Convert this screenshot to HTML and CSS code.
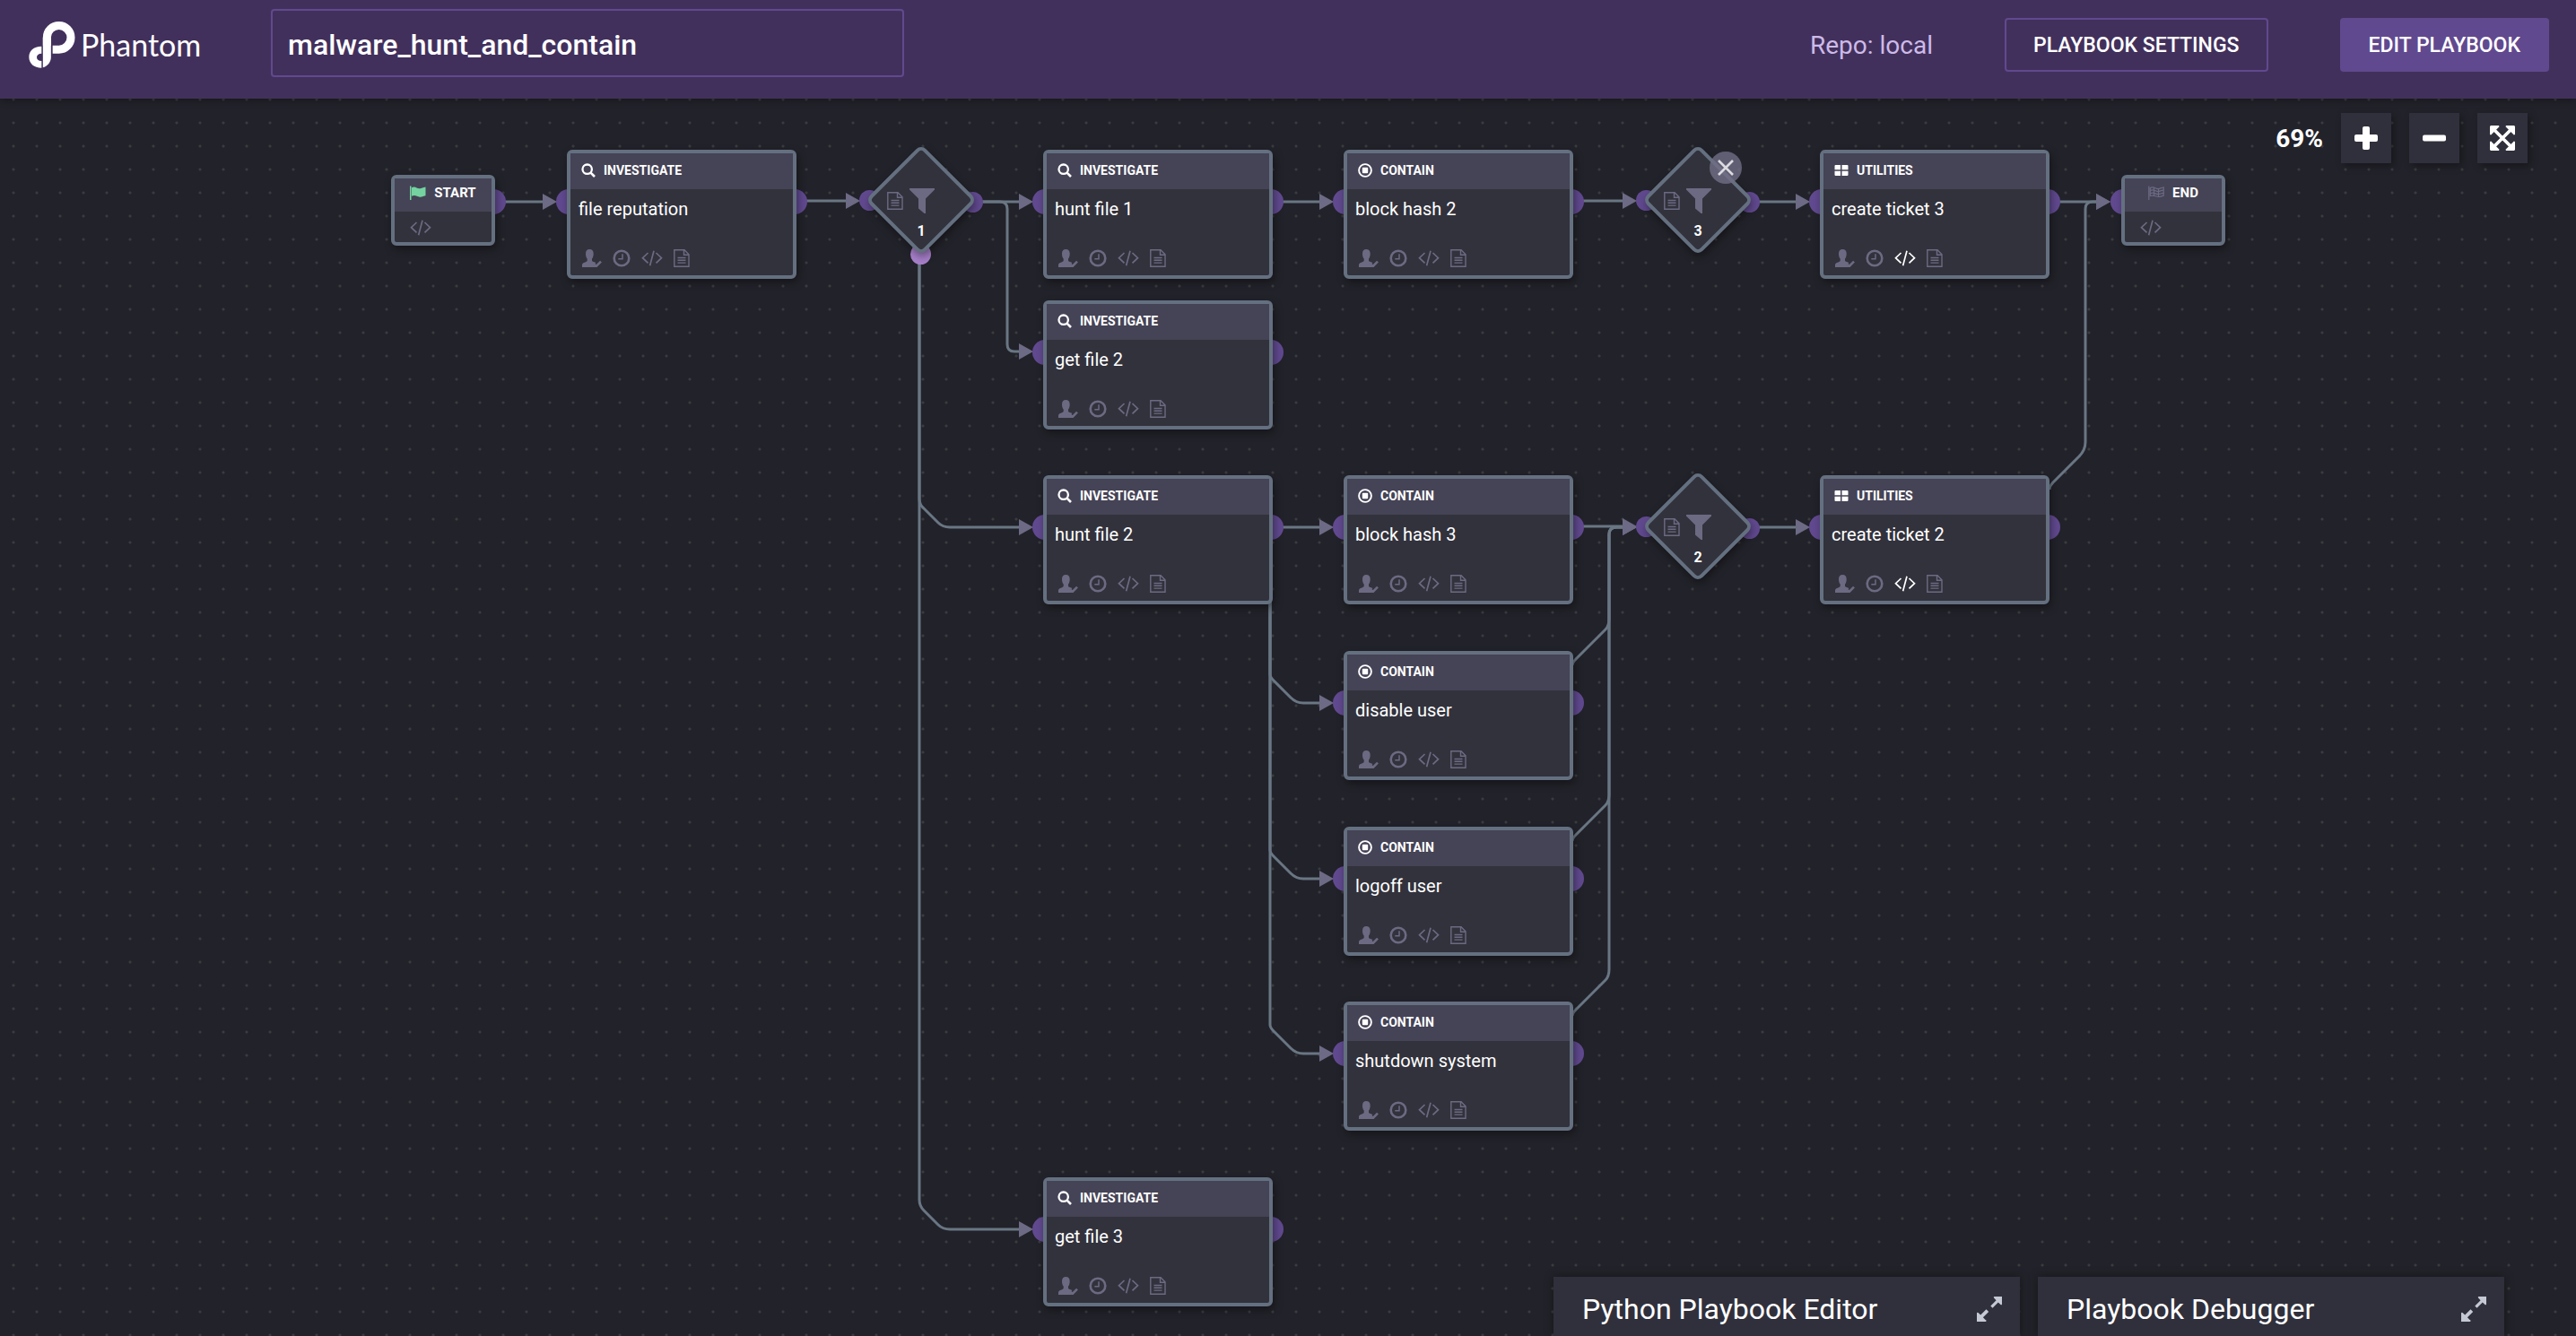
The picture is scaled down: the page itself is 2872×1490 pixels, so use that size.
FILE: index.html
```html
<!DOCTYPE html>
<html lang="en">
<head>
<meta charset="utf-8">
<title>Phantom - malware_hunt_and_contain</title>
<link rel="stylesheet" href="styles.css">
</head>
<body>
<svg class="sprite" aria-hidden="true">
  <symbol id="search" viewBox="0 0 16 16"><circle cx="6.7" cy="6.7" r="5.2" fill="none" stroke="currentColor" stroke-width="2.3"/><path d="M10.3 10.3 15 15" stroke="currentColor" stroke-width="2.6"/></symbol>
  <symbol id="contain" viewBox="0 0 16 16"><circle cx="8" cy="8" r="6.9" fill="none" stroke="currentColor" stroke-width="1.9"/><rect x="4.8" y="4.8" width="6.4" height="6.4" rx="1" fill="currentColor"/></symbol>
  <symbol id="utilities" viewBox="0 0 16 16"><path fill="currentColor" d="M1.5 2H7v5.300H.5V3a1 1 0 0 1 1-1zM8.500 2h6a1 1 0 0 1 1 1v4.300h-7zM.5 8.700H7V14H1.500a1 1 0 0 1-1-1zM8.500 8.700h7V13a1 1 0 0 1-1 1h-6z"/></symbol>
  <symbol id="user" viewBox="0 0 22 20"><path fill="currentColor" d="M4 5C4 1.500 5.500 0 8.300 0s4.400 1.500 4.400 5c0 2.600-.7 4.500-1.700 5.600v2.200c0 1 3.600 1.500 4.300 2.400L13.500 17l1.800 3H0v-2.700c0-2.500 5.700-3 5.700-4.500v-2.200C4.700 9.500 4 7.600 4 5z"/><path d="m13 16.300 2.700 2.700L21 13.600" fill="none" stroke="currentColor" stroke-width="2.600"/></symbol>
  <symbol id="clock" viewBox="0 0 20 20"><circle cx="10" cy="10" r="8.300" fill="none" stroke="currentColor" stroke-width="2.600"/><path d="M11 5.300v5.500H6.300" fill="none" stroke="currentColor" stroke-width="1.500"/></symbol>
  <symbol id="code" viewBox="0 0 24 18"><path d="M7.500 3 1.500 8.700l6 5.700M14 .8 9.600 17.200M16.500 3l6 5.700-6 5.700" fill="none" stroke="currentColor" stroke-width="1.700"/></symbol>
  <symbol id="doc" viewBox="0 0 18 20"><path d="M.8.8H12l5 5v13.400H.8zM11.500.8v5.500H17M4.500 9.500h9M4.500 12.300h9M4.500 15.100h9" fill="none" stroke="currentColor" stroke-width="1.400"/></symbol>
  <symbol id="funnel" viewBox="0 0 28 28"><path fill="currentColor" d="M0 0h28v1.500L18 11.500V28h-1.500L10 22.500v-11L0 1.500z"/></symbol>
  <symbol id="flag" viewBox="0 0 18 16"><path fill="currentColor" d="M0 .5h1.500V16H0zM2 2.200c4-2.500 6 1.600 9 1 2-.3 3.500-1.200 6.500-1.700v9.700c-2 .2-4 1.700-6.500 1.500-3-.3-5-2.700-9-1z"/></symbol>
  <symbol id="finish" viewBox="0 0 18 16"><path d="M.8.5V16M2.300 2.500c4-2.300 6 1.500 9 1 2-.3 3.300-1 5.900-1.500v9.200c-2 .2-3.500 1.500-5.900 1.300-3-.3-5-2.500-9-1z" fill="none" stroke="currentColor" stroke-width="1.200"/><path d="M2.500 5.500c4-2 6 1.500 9 1 2-.3 3-1 5.500-1.300M2.500 8.600c4-2 6 1.500 9 1 2-.3 3-1 5.500-1.300M6.500 1.800v9.500M11.500 3.500v9" fill="none" stroke="currentColor" stroke-width="1.200"/></symbol>
  <symbol id="expand" viewBox="0 0 28 28"><g fill="currentColor"><path d="M18.500 0H27v8.500a1 1 0 0 1-1.500.6l-2.700-2.700-6.300 6.300-2.200-2.200 6.300-6.300L18 1.500a1 1 0 0 1 .5-1.500z" transform="translate(1)"/><path d="M9.500 28H0v-9.500a1 1 0 0 1 1.500-.6l2.700 2.700 6.300-6.300 2.700 2.700-6.300 6.300L9.600 26a1 1 0 0 1-.1 2z"/></g></symbol>
  <symbol id="fit" viewBox="0 0 28 28"><path d="m5 5 18 18M23 5 5 23" stroke="currentColor" stroke-width="3.600"/><path fill="currentColor" d="M1 0h9l.5 1.200L1.200 10.500 0 10V1zM27 0h-9l-.5 1.200 9.300 9.300L28 10V1zM1 28h9l.5-1.200-9.300-9.300L0 18v9zM27 28h-9l-.5-1.200 9.300-9.300L28 18v9z"/></symbol>
</svg>

<header class="topbar">
  <a class="brand" href="#">
    <svg class="brand-mark" viewBox="24 30 154 156" aria-hidden="true">
      <path d="M84 110V83a40 40 0 1 1 40 40.500H103" fill="none" stroke="#fff" stroke-width="27"/>
      <path d="M70.500 83h27v67c0 16-12 30-27 34zM66 113c-28 0-42 16-42 36 0 21 17 36 42 36v-23c-11 0-16-5-16-12 0-8 6-13 16-13z" fill="#fff"/>
    </svg>
    <span>Phantom</span>
  </a>
  <input class="playbook-name" type="text" value="malware_hunt_and_contain" aria-label="Playbook name">
  <span class="repo">Repo: local</span>
  <button class="btn" type="button">PLAYBOOK SETTINGS</button>
  <button class="btn btn-primary" type="button">EDIT PLAYBOOK</button>
</header>

<main class="canvas">
  <svg class="edges" aria-hidden="true">
    <defs><marker id="arrow" viewBox="0 0 16 18" markerWidth="16" markerHeight="18" refX="0" refY="9" orient="auto" markerUnits="userSpaceOnUse"><path d="M0 0 16 9 0 18z" fill="#6c6a84"/></marker></defs>
    <g class="with-arrow">
      <path d="M560 115H605"/>
      <path d="M895 114H943"/>
      <path d="M1092 115H1136"/>
      <path d="M1092 115H1115Q1123 115 1123 123V274Q1123 282 1131 282H1136"/>
      <path d="M1025 180V446Q1025 453 1030 457L1046 473Q1051 478 1059 478H1136"/>
      <path d="M1025 180V1228Q1025 1235 1030 1240L1046 1256Q1051 1261 1059 1261H1136"/>
      <path d="M1414 115H1471"/>
      <path d="M1750 114H1809"/>
      <path d="M1960 115H2002"/>
      <path d="M2281 115H2337"/>
      <path d="M2285 436Q2285 432 2289 428L2318 399Q2325 392 2325 383V123Q2325 115 2333 115H2337"/>
      <path d="M1414 478H1471"/>
      <path d="M1416 500V642Q1416 645 1420 649L1439 668Q1445 674 1453 674H1471"/>
      <path d="M1416 500V838Q1416 841 1420 845L1439 864Q1445 870 1453 870H1471"/>
      <path d="M1416 500V1033Q1416 1036 1420 1040L1439 1059Q1445 1065 1453 1065H1471"/>
      <path d="M1750 477H1809"/>
      <path d="M1753 632Q1753 629 1757 625L1790 592Q1794 588 1794 580V486Q1794 478 1802 478H1809"/>
      <path d="M1753 828Q1753 825 1757 821L1790 788Q1794 784 1794 776V486Q1794 478 1802 478H1809"/>
      <path d="M1753 1023Q1753 1020 1757 1016L1790 983Q1794 979 1794 971V486Q1794 478 1802 478H1809"/>
      <path d="M1960 478H2002"/>
    </g>
  </svg>

  <article class="node terminal x-start y-terminal">
    <i class="port port-out"></i>
    <h2 class="node-head"><svg class="flag flag-start"><use href="#flag"/></svg>START</h2>
    <div class="node-icons"><svg class="i-code"><use href="#code"/></svg></div>
  </article>

  <article class="node x-1 y-1">
    <i class="port port-in"></i><i class="port port-out"></i>
    <h2 class="node-head"><svg class="i-type"><use href="#search"/></svg>INVESTIGATE</h2>
    <p class="node-name">file reputation</p>
    <div class="node-icons"><svg class="i-user"><use href="#user"/></svg><svg class="i-clock"><use href="#clock"/></svg><svg class="i-code"><use href="#code"/></svg><svg class="i-doc"><use href="#doc"/></svg></div>
  </article>

  <article class="filter x-filter-1 y-filter-1">
    <i class="dot dot-in"></i><i class="dot dot-out"></i><i class="dot dot-else"></i>
    <div class="diamond"></div>
    <div class="filter-body"><svg class="i-doc"><use href="#doc"/></svg><svg class="i-funnel"><use href="#funnel"/></svg></div>
    <strong class="filter-number">1</strong>
  </article>

  <article class="node x-2 y-1">
    <i class="port port-in"></i><i class="port port-out"></i>
    <h2 class="node-head"><svg class="i-type"><use href="#search"/></svg>INVESTIGATE</h2>
    <p class="node-name">hunt file 1</p>
    <div class="node-icons"><svg class="i-user"><use href="#user"/></svg><svg class="i-clock"><use href="#clock"/></svg><svg class="i-code"><use href="#code"/></svg><svg class="i-doc"><use href="#doc"/></svg></div>
  </article>

  <article class="node x-2 y-2">
    <i class="port port-in"></i><i class="port port-out"></i>
    <h2 class="node-head"><svg class="i-type"><use href="#search"/></svg>INVESTIGATE</h2>
    <p class="node-name">get file 2</p>
    <div class="node-icons"><svg class="i-user"><use href="#user"/></svg><svg class="i-clock"><use href="#clock"/></svg><svg class="i-code"><use href="#code"/></svg><svg class="i-doc"><use href="#doc"/></svg></div>
  </article>

  <article class="node x-2 y-3">
    <i class="port port-in"></i><i class="port port-out"></i>
    <h2 class="node-head"><svg class="i-type"><use href="#search"/></svg>INVESTIGATE</h2>
    <p class="node-name">hunt file 2</p>
    <div class="node-icons"><svg class="i-user"><use href="#user"/></svg><svg class="i-clock"><use href="#clock"/></svg><svg class="i-code"><use href="#code"/></svg><svg class="i-doc"><use href="#doc"/></svg></div>
  </article>

  <article class="node x-2 y-7">
    <i class="port port-in"></i><i class="port port-out"></i>
    <h2 class="node-head"><svg class="i-type"><use href="#search"/></svg>INVESTIGATE</h2>
    <p class="node-name">get file 3</p>
    <div class="node-icons"><svg class="i-user"><use href="#user"/></svg><svg class="i-clock"><use href="#clock"/></svg><svg class="i-code"><use href="#code"/></svg><svg class="i-doc"><use href="#doc"/></svg></div>
  </article>

  <article class="node x-3 y-1">
    <i class="port port-in"></i><i class="port port-out"></i>
    <h2 class="node-head"><svg class="i-type"><use href="#contain"/></svg>CONTAIN</h2>
    <p class="node-name">block hash 2</p>
    <div class="node-icons"><svg class="i-user"><use href="#user"/></svg><svg class="i-clock"><use href="#clock"/></svg><svg class="i-code"><use href="#code"/></svg><svg class="i-doc"><use href="#doc"/></svg></div>
  </article>

  <article class="node x-3 y-3">
    <i class="port port-in"></i><i class="port port-out"></i>
    <h2 class="node-head"><svg class="i-type"><use href="#contain"/></svg>CONTAIN</h2>
    <p class="node-name">block hash 3</p>
    <div class="node-icons"><svg class="i-user"><use href="#user"/></svg><svg class="i-clock"><use href="#clock"/></svg><svg class="i-code"><use href="#code"/></svg><svg class="i-doc"><use href="#doc"/></svg></div>
  </article>

  <article class="node x-3 y-4">
    <i class="port port-in"></i><i class="port port-out"></i>
    <h2 class="node-head"><svg class="i-type"><use href="#contain"/></svg>CONTAIN</h2>
    <p class="node-name">disable user</p>
    <div class="node-icons"><svg class="i-user"><use href="#user"/></svg><svg class="i-clock"><use href="#clock"/></svg><svg class="i-code"><use href="#code"/></svg><svg class="i-doc"><use href="#doc"/></svg></div>
  </article>

  <article class="node x-3 y-5">
    <i class="port port-in"></i><i class="port port-out"></i>
    <h2 class="node-head"><svg class="i-type"><use href="#contain"/></svg>CONTAIN</h2>
    <p class="node-name">logoff user</p>
    <div class="node-icons"><svg class="i-user"><use href="#user"/></svg><svg class="i-clock"><use href="#clock"/></svg><svg class="i-code"><use href="#code"/></svg><svg class="i-doc"><use href="#doc"/></svg></div>
  </article>

  <article class="node x-3 y-6">
    <i class="port port-in"></i><i class="port port-out"></i>
    <h2 class="node-head"><svg class="i-type"><use href="#contain"/></svg>CONTAIN</h2>
    <p class="node-name">shutdown system</p>
    <div class="node-icons"><svg class="i-user"><use href="#user"/></svg><svg class="i-clock"><use href="#clock"/></svg><svg class="i-code"><use href="#code"/></svg><svg class="i-doc"><use href="#doc"/></svg></div>
  </article>

  <article class="filter x-filter-2 y-filter-1">
    <i class="dot dot-in"></i><i class="dot dot-out"></i>
    <div class="diamond"></div>
    <div class="filter-body"><svg class="i-doc"><use href="#doc"/></svg><svg class="i-funnel"><use href="#funnel"/></svg></div>
    <strong class="filter-number">3</strong>
    <button class="close" type="button" aria-label="Remove filter 3"><svg viewBox="0 0 18 18"><path d="m1 1 16 16M17 1 1 17" stroke="currentColor" stroke-width="2.600"/></svg></button>
  </article>

  <article class="filter x-filter-2 y-filter-2">
    <i class="dot dot-in"></i><i class="dot dot-out"></i>
    <div class="diamond"></div>
    <div class="filter-body"><svg class="i-doc"><use href="#doc"/></svg><svg class="i-funnel"><use href="#funnel"/></svg></div>
    <strong class="filter-number">2</strong>
  </article>

  <article class="node x-4 y-1">
    <i class="port port-in"></i><i class="port port-out"></i>
    <h2 class="node-head"><svg class="i-type"><use href="#utilities"/></svg>UTILITIES</h2>
    <p class="node-name">create ticket 3</p>
    <div class="node-icons"><svg class="i-user"><use href="#user"/></svg><svg class="i-clock"><use href="#clock"/></svg><svg class="i-code is-on"><use href="#code"/></svg><svg class="i-doc"><use href="#doc"/></svg></div>
  </article>

  <article class="node x-4 y-3">
    <i class="port port-in"></i><i class="port port-out"></i>
    <h2 class="node-head"><svg class="i-type"><use href="#utilities"/></svg>UTILITIES</h2>
    <p class="node-name">create ticket 2</p>
    <div class="node-icons"><svg class="i-user"><use href="#user"/></svg><svg class="i-clock"><use href="#clock"/></svg><svg class="i-code is-on"><use href="#code"/></svg><svg class="i-doc"><use href="#doc"/></svg></div>
  </article>

  <article class="node terminal x-end y-terminal">
    <i class="port port-in"></i>
    <h2 class="node-head"><svg class="flag"><use href="#finish"/></svg>END</h2>
    <div class="node-icons"><svg class="i-code"><use href="#code"/></svg></div>
  </article>

  <div class="zoom-bar">
    <output class="zoom-level">69%</output>
    <button type="button" aria-label="Zoom in"><svg class="i-zoom" viewBox="0 0 26 26"><path d="M11 0h4q2 0 2 2v7h7q2 0 2 2v4q0 2-2 2h-7v7q0 2-2 2h-4q-2 0-2-2v-7H2q-2 0-2-2v-4q0-2 2-2h7V2q0-2 2-2z" fill="currentColor"/></svg></button>
    <button type="button" aria-label="Zoom out"><svg class="i-zoom" viewBox="0 0 26 26"><rect y="9.500" width="26" height="7" rx="2" fill="currentColor"/></svg></button>
    <button type="button" aria-label="Fit to screen"><svg class="i-fit"><use href="#fit"/></svg></button>
  </div>

  <div class="dock">
    <button class="panel" type="button">Python Playbook Editor<svg class="i-expand"><use href="#expand"/></svg></button>
    <button class="panel" type="button">Playbook Debugger<svg class="i-expand"><use href="#expand"/></svg></button>
  </div>
</main>
</body>
</html>
```

FILE: styles.css
```css
* { box-sizing: border-box; }

body {
  margin: 0;
  min-height: 100vh;
  display: flex;
  flex-direction: column;
  background: #22222a;
  color: #fff;
  font-family: Roboto, "Liberation Sans", sans-serif;
}

button, input { font: inherit; color: inherit; }
button { cursor: pointer; }
svg { display: block; flex: none; }
.sprite { position: absolute; width: 0; height: 0; }

/* Top bar */
.topbar {
  position: relative;
  z-index: 1;
  display: flex;
  align-items: center;
  height: 110px;
  padding: 0 30px 10px 32px;
  background: #42305c;
  box-shadow: 0 2px 8px rgba(0, 0, 0, .35);
}
.brand {
  display: flex;
  align-items: center;
  gap: 6px;
  width: 270px;
  color: #fff;
  font: 400 34px/52px Lato, sans-serif;
  text-decoration: none;
}
.brand-mark { width: 52px; height: 52px; }
.playbook-name {
  width: 706px;
  height: 76px;
  margin-top: -4px;
  padding: 4px 17px 0;
  border: 2px solid #61498f;
  border-radius: 4px;
  background: transparent;
  font-size: 32px;
  font-weight: 500;
}
.repo {
  margin-left: auto;
  margin-right: 80px;
  color: #cdbbe8;
  font-size: 28px;
}
.btn {
  height: 60px;
  padding: 0 30px;
  border: 2px solid #61498f;
  border-radius: 4px;
  background: transparent;
  font-size: 23px;
  font-weight: 500;
}
.btn-primary { margin-left: 80px; background: #61498f; }

/* Canvas */
.canvas {
  position: relative;
  isolation: isolate;
  flex: 1;
  min-height: 1380px;
  overflow: hidden;
  background: #22222a radial-gradient(circle at 13px 13px, #3a3b40 1px, transparent 2px) 2px -12px / 26px 26px;
}
.edges {
  position: absolute;
  inset: 0;
  z-index: -2;
  width: 100%;
  height: 100%;
}
.with-arrow path {
  fill: none;
  stroke: #697683;
  stroke-width: 3;
  marker-end: url(#arrow);
}

/* Blocks */
.node {
  position: absolute;
  width: 256px;
  height: 144px;
  border: 4px solid #647080;
  border-radius: 6px;
  background: #32323c;
  box-shadow: 2px 4px 10px rgba(0, 0, 0, .4);
}
.node-head {
  display: flex;
  align-items: center;
  gap: 9px;
  height: 40px;
  margin: 0;
  padding: 0 12px 2px;
  background: #454356;
  font-size: 14px;
  font-weight: 700;
}
.node-name {
  margin: 0;
  padding: 8px 9px 0;
  font-size: 20px;
  line-height: 28px;
}
.node-icons {
  display: flex;
  align-items: center;
  gap: 12px;
  padding: 31px 13px 0;
  color: #6c6a82;
}
.i-type { width: 16px; height: 16px; }
.i-user { width: 22px; height: 20px; }
.i-clock { width: 20px; height: 20px; }
.i-code { width: 24px; height: 18px; }
.i-doc { width: 18px; height: 20px; }
.i-funnel { width: 28px; height: 28px; }
.is-on { color: #fff; }

.port {
  position: absolute;
  top: 40px;
  z-index: -1;
  width: 28px;
  height: 28px;
  border-radius: 50%;
  background: #61498f;
}
.port-in { left: -16px; }
.port-out { right: -16px; }

.terminal { width: 116px; height: 79px; }
.terminal .node-head { justify-content: center; height: 37px; font-size: 15px; padding-bottom: 6px; }
.terminal .node-icons { padding: 9px 17px 0; }
.terminal .port { top: 12px; }
.flag { width: 18px; height: 16px; color: #6c6a82; }
.flag-start { color: #74d3a0; }

/* Filters */
.filter {
  position: absolute;
  width: 118px;
  height: 118px;
}
.diamond {
  position: absolute;
  top: 15px;
  left: 15px;
  width: 88px;
  height: 88px;
  border: 4px solid #647080;
  border-radius: 8px;
  background: #32323c;
  box-shadow: 4px 2px 10px rgba(0, 0, 0, .4);
  transform: rotate(45deg);
}
.filter-body {
  position: relative;
  display: flex;
  align-items: center;
  gap: 7px;
  padding: 46px 0 0 21px;
  color: #6c6a82;
}
.filter-number {
  position: relative;
  display: block;
  padding-top: 10px;
  font-size: 16px;
  line-height: 20px;
  text-align: center;
}
.dot {
  position: absolute;
  z-index: -1;
  width: 23px;
  height: 23px;
  border-radius: 50%;
  background: #61498f;
}
.dot-in { top: 48px; left: -10px; }
.dot-out { top: 50px; right: -10px; }
.dot-else { bottom: -13px; left: 47px; background: #a67fc9; }
.close {
  position: absolute;
  top: 5px;
  left: 72px;
  display: grid;
  place-items: center;
  width: 36px;
  height: 36px;
  padding: 0;
  border: 0;
  border-radius: 50%;
  background: rgba(112, 110, 134, .8);
  color: #dcdbe0;
}
.close svg { width: 18px; height: 18px; }

/* Block positions on the canvas */
.x-start { left: 436px; }
.x-1 { left: 632px; }
.x-filter-1 { left: 968px; }
.x-2 { left: 1163px; }
.x-3 { left: 1498px; }
.x-filter-2 { left: 1834px; }
.x-4 { left: 2029px; }
.x-end { left: 2365px; }
.y-terminal { top: 85px; }
.y-filter-1 { top: 54px; }
.y-filter-2 { top: 418px; }
.y-1 { top: 57px; }
.y-2 { top: 225px; }
.y-3 { top: 420px; }
.y-4 { top: 616px; }
.y-5 { top: 812px; }
.y-6 { top: 1007px; }
.y-7 { top: 1203px; }

/* Floating controls */
.zoom-bar {
  position: absolute;
  top: 16px;
  right: 54px;
  display: flex;
  align-items: center;
  gap: 20px;
}
.zoom-bar button {
  display: grid;
  place-items: center;
  width: 56px;
  height: 56px;
  padding: 0;
  border: 0;
  background: #30303c;
  box-shadow: 3px 3px 8px rgba(0, 0, 0, .35);
}
.zoom-level { font-size: 28px; font-weight: 700; }
.i-zoom { width: 26px; height: 26px; }
.i-fit { width: 28px; height: 28px; }

.dock {
  position: absolute;
  right: 80px;
  bottom: 0;
  display: flex;
  gap: 20px;
}
.panel {
  display: flex;
  align-items: center;
  justify-content: space-between;
  width: 520px;
  height: 66px;
  padding: 6px 20px 0 32px;
  border: 0;
  background: #30303c;
  box-shadow: 0 0 10px rgba(0, 0, 0, .4);
  font-size: 32px;
}
.i-expand { width: 28px; height: 28px; color: #c5c9d3; }
```
